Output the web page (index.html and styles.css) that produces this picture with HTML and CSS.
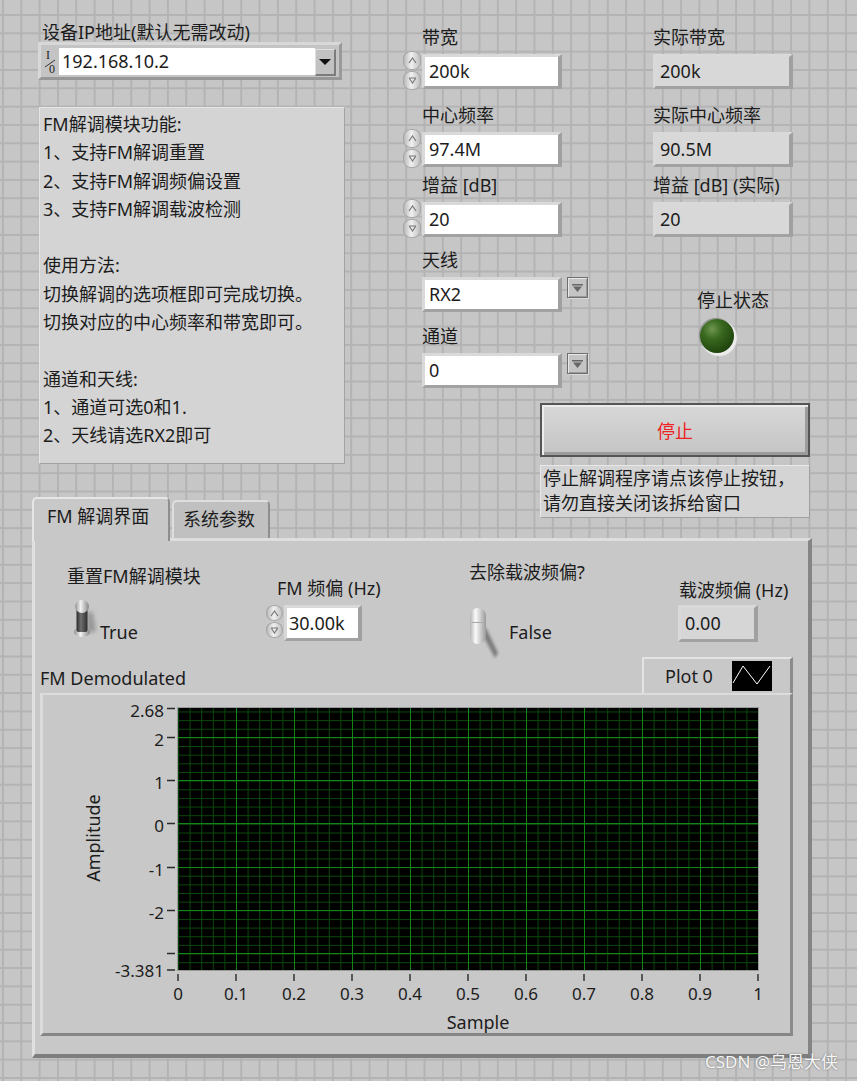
FILE: index.html
```html
<!DOCTYPE html>
<html lang="zh">
<head>
<meta charset="utf-8">
<title>FM 解调</title>
<link rel="stylesheet" href="styles.css">
</head>
<body>
<div class="top">
  <div class="col-a">
    <div class="lbl lbl-ip">设备IP地址(默认无需改动)</div>
    <div class="combo">
      <svg class="io" width="16" height="27" viewBox="0 0 16 27">
        <text x="3" y="11" class="io-t">I</text>
        <line x1="2" y1="19" x2="12" y2="12" stroke="#333" stroke-width="1"/>
        <text x="6" y="25" class="io-t">0</text>
      </svg>
      <div class="combo-val">192.168.10.2</div>
      <div class="combo-btn"><svg width="12" height="6" viewBox="0 0 12 6"><path d="M0 0H12L6 6Z" fill="#111"/></svg></div>
    </div>
    <div class="desc">
      <div>FM解调模块功能:</div>
      <div>1、支持FM解调重置</div>
      <div>2、支持FM解调频偏设置</div>
      <div>3、支持FM解调载波检测</div>
      <div class="blank"></div>
      <div>使用方法:</div>
      <div>切换解调的选项框即可完成切换。</div>
      <div>切换对应的中心频率和带宽即可。</div>
      <div class="blank"></div>
      <div>通道和天线:</div>
      <div>1、通道可选0和1.</div>
      <div>2、天线请选RX2即可</div>
    </div>
  </div>

  <div class="col-right">
    <div class="row1">
      <div class="col-b">
        <div class="ctl g1">
          <div class="lbl">带宽</div>
          <div class="num">
            <div class="inc">
              <div class="inc-b"><svg width="9" height="7" viewBox="0 0 9 7"><path d="M1 6L4.5 1L8 6" fill="none" stroke="#777" stroke-width="1.2"/></svg></div>
              <div class="inc-b"><svg width="9" height="7" viewBox="0 0 9 7"><path d="M1 1H8M1.5 1.5L4.5 6L7.5 1.5" fill="none" stroke="#777" stroke-width="1.2"/></svg></div>
            </div>
            <div class="field wbox">200k</div>
          </div>
        </div>
        <div class="ctl g2">
          <div class="lbl">中心频率</div>
          <div class="num">
            <div class="inc">
              <div class="inc-b"><svg width="9" height="7" viewBox="0 0 9 7"><path d="M1 6L4.5 1L8 6" fill="none" stroke="#777" stroke-width="1.2"/></svg></div>
              <div class="inc-b"><svg width="9" height="7" viewBox="0 0 9 7"><path d="M1 1H8M1.5 1.5L4.5 6L7.5 1.5" fill="none" stroke="#777" stroke-width="1.2"/></svg></div>
            </div>
            <div class="field wbox">97.4M</div>
          </div>
        </div>
        <div class="ctl g3">
          <div class="lbl">增益 [dB]</div>
          <div class="num">
            <div class="inc">
              <div class="inc-b"><svg width="9" height="7" viewBox="0 0 9 7"><path d="M1 6L4.5 1L8 6" fill="none" stroke="#777" stroke-width="1.2"/></svg></div>
              <div class="inc-b"><svg width="9" height="7" viewBox="0 0 9 7"><path d="M1 1H8M1.5 1.5L4.5 6L7.5 1.5" fill="none" stroke="#777" stroke-width="1.2"/></svg></div>
            </div>
            <div class="field wbox">20</div>
          </div>
        </div>
        <div class="ctl g4">
          <div class="lbl">天线</div>
          <div class="ring">
            <div class="field wbox">RX2</div>
            <div class="ring-btn"><svg width="11" height="8" viewBox="0 0 11 8"><path d="M0 0H11V1.4H0Z M1 2.6H10L5.5 8Z" fill="#666"/></svg></div>
          </div>
        </div>
        <div class="ctl g5">
          <div class="lbl">通道</div>
          <div class="ring">
            <div class="field wbox">0</div>
            <div class="ring-btn"><svg width="11" height="8" viewBox="0 0 11 8"><path d="M0 0H11V1.4H0Z M1 2.6H10L5.5 8Z" fill="#666"/></svg></div>
          </div>
        </div>
      </div>

      <div class="col-c">
        <div class="ctl g1">
          <div class="lbl">实际带宽</div>
          <div class="field ibox">200k</div>
        </div>
        <div class="ctl g2">
          <div class="lbl">实际中心频率</div>
          <div class="field ibox">90.5M</div>
        </div>
        <div class="ctl g3">
          <div class="lbl">增益 [dB] (实际)</div>
          <div class="field ibox">20</div>
        </div>
        <div class="led-grp">
          <div class="lbl led-lbl">停止状态</div>
          <div class="led"></div>
        </div>
      </div>
    </div>

    <div class="stop-btn">停止</div>
    <div class="note">停止解调程序请点该停止按钮，<br>请勿直接关闭该拆给窗口</div>
  </div>
</div>

<div class="tabctl">
  <div class="tabs">
    <div class="tab active">FM 解调界面</div>
    <div class="tab">系统参数</div>
  </div>
  <div class="panel">
    <div class="ctl-row">
      <div class="pg pg1">
        <div class="lbl">重置FM解调模块</div>
        <div class="sw-row">
          <svg class="sw-t" width="26" height="40" viewBox="0 0 26 40">
            <defs>
              <linearGradient id="tgH" x1="0" y1="0" x2="1" y2="0">
                <stop offset="0" stop-color="#8e8e8e"/><stop offset=".4" stop-color="#f2f2f2"/><stop offset="1" stop-color="#868686"/>
              </linearGradient>
              <linearGradient id="tgS" x1="0" y1="0" x2="1" y2="0">
                <stop offset="0" stop-color="#2a2a2a"/><stop offset=".4" stop-color="#707070"/><stop offset="1" stop-color="#2e2e2e"/>
              </linearGradient>
              <filter id="bl1" x="-50%" y="-50%" width="200%" height="200%"><feGaussianBlur stdDeviation="2"/></filter>
            </defs>
            <path d="M15 13 L21 15 L24 33 L15 35Z" fill="#6e6e6e" opacity=".55" filter="url(#bl1)"/>
            <ellipse cx="10" cy="34" rx="8" ry="5" fill="url(#tgH)"/>
            <rect x="4.5" y="8" width="11" height="26" rx="2" fill="url(#tgS)"/>
            <rect x="3" y="2" width="14" height="13" rx="7" fill="url(#tgH)"/>
          </svg>
          <span class="sw-txt">True</span>
        </div>
      </div>
      <div class="pg pg2">
        <div class="lbl">FM 频偏 (Hz)</div>
        <div class="num">
          <div class="inc sm">
            <div class="inc-b"><svg width="9" height="7" viewBox="0 0 9 7"><path d="M1 6L4.5 1L8 6" fill="none" stroke="#777" stroke-width="1.2"/></svg></div>
            <div class="inc-b"><svg width="9" height="7" viewBox="0 0 9 7"><path d="M1 1H8M1.5 1.5L4.5 6L7.5 1.5" fill="none" stroke="#777" stroke-width="1.2"/></svg></div>
          </div>
          <div class="field wbox fsm">30.00k</div>
        </div>
      </div>
      <div class="pg pg3">
        <div class="lbl">去除载波频偏?</div>
        <div class="sw-row">
          <svg class="sw-f" width="32" height="54" viewBox="0 0 32 54">
            <defs>
              <linearGradient id="tgF" x1="0" y1="0" x2="1" y2="0">
                <stop offset="0" stop-color="#b4b4b4"/><stop offset=".35" stop-color="#fafafa"/><stop offset="1" stop-color="#9a9a9a"/>
              </linearGradient>
              <filter id="bl2" x="-50%" y="-50%" width="200%" height="200%"><feGaussianBlur stdDeviation="1.6"/></filter>
            </defs>
            <path d="M12 24 L18 22 L30 47 L27 52 Z" fill="#4a4a4a" opacity=".6" filter="url(#bl2)"/>
            <rect x="2" y="2" width="16" height="36" rx="8" fill="url(#tgF)"/>
            <path d="M3.5 16.5 H16.5" stroke="#a8a8a8" stroke-width="1"/>
          </svg>
          <span class="sw-txt sw-false">False</span>
        </div>
      </div>
      <div class="pg pg4">
        <div class="lbl">载波频偏 (Hz)</div>
        <div class="field ibox fsm2">0.00</div>
      </div>
    </div>

    <div class="graph-head">
      <div class="graph-title">FM Demodulated</div>
      <div class="legend">
        <span class="plot-name">Plot 0</span>
        <span class="plot-icon"><svg width="40" height="30" viewBox="0 0 40 30"><path d="M1 22 L11 5 L25 23 L38 5" fill="none" stroke="#fff" stroke-width="1"/></svg></span>
      </div>
    </div>

    <div class="graph">
      <svg class="chart" width="747" height="338" viewBox="0 0 747 338">
        <defs>
          <pattern id="mv" x="135" y="0" width="11.6" height="20" patternUnits="userSpaceOnUse">
            <rect x="0" y="0" width="1" height="20" fill="#0a480a"/>
          </pattern>
          <pattern id="mh" x="0" y="7.81" width="20" height="8.6454" patternUnits="userSpaceOnUse">
            <rect x="0" y="0" width="20" height="1" fill="#0a480a"/>
          </pattern>
        </defs>
        <rect x="135" y="13" width="580" height="262" fill="#000"/>
        <rect x="135" y="13" width="580" height="262" fill="url(#mv)"/>
        <rect x="135" y="13" width="580" height="262" fill="url(#mh)"/>
        <g fill="#13861a">
          <rect x="193" y="13" width="1" height="262"/>
          <rect x="251" y="13" width="1" height="262"/>
          <rect x="309" y="13" width="1" height="262"/>
          <rect x="367" y="13" width="1" height="262"/>
          <rect x="425" y="13" width="1" height="262"/>
          <rect x="483" y="13" width="1" height="262"/>
          <rect x="541" y="13" width="1" height="262"/>
          <rect x="599" y="13" width="1" height="262"/>
          <rect x="657" y="13" width="1" height="262"/>
          <rect x="135" y="42" width="580" height="1"/>
          <rect x="135" y="85" width="580" height="1"/>
          <rect x="135" y="128" width="580" height="1"/>
          <rect x="135" y="172" width="580" height="1"/>
          <rect x="135" y="215" width="580" height="1"/>
          <rect x="135" y="258" width="580" height="1"/>
        </g>
        <rect x="134.5" y="12.5" width="581" height="263" fill="none" stroke="#9a9a9a" stroke-width="1"/>
        <g stroke="#2a2a2a" stroke-width="1.4">
          <path d="M124 13.5H132M124 42.5H132M124 85.5H132M124 128.5H132M124 172.5H132M124 215.5H132M124 258.5H132M124 275H132"/>
          <path d="M135 279V286M193 279V286M251 279V286M309 279V286M367 279V286M425 279V286M483 279V286M541 279V286M599 279V286M657 279V286M715 279V286"/>
        </g>
        <g class="ylab" text-anchor="end">
          <text x="121" y="15">2.68</text>
          <text x="121" y="44">2</text>
          <text x="121" y="87">1</text>
          <text x="121" y="130">0</text>
          <text x="121" y="174">-1</text>
          <text x="121" y="217">-2</text>
          <text x="121" y="275">-3.381</text>
        </g>
        <g class="xlab" text-anchor="middle">
          <text x="135" y="298">0</text>
          <text x="193" y="298">0.1</text>
          <text x="251" y="298">0.2</text>
          <text x="309" y="298">0.3</text>
          <text x="367" y="298">0.4</text>
          <text x="425" y="298">0.5</text>
          <text x="483" y="298">0.6</text>
          <text x="541" y="298">0.7</text>
          <text x="599" y="298">0.8</text>
          <text x="657" y="298">0.9</text>
          <text x="715" y="298">1</text>
        </g>
        <text class="axname" x="435" y="327" text-anchor="middle">Sample</text>
        <text class="axname" x="50" y="143" text-anchor="middle" transform="rotate(-90 50 143)">Amplitude</text>
      </svg>
    </div>
  </div>
</div>

<div class="wm">CSDN @乌恩大侠</div>
</body>
</html>
```

FILE: styles.css
```css
* { box-sizing: border-box; }
html, body { margin: 0; padding: 0; }
body {
  width: 857px;
  height: 1081px;
  overflow: hidden;
  position: relative;
  font-family: "Noto Sans", "Noto Sans CJK SC", sans-serif;
  font-size: 18px;
  color: #1c1c1c;
  background-color: #c6c6c6;
  background-image:
    linear-gradient(to right, #b3b3b3 0, #b3b3b3 2px, transparent 2px),
    linear-gradient(to bottom, #b3b3b3 0, #b3b3b3 2px, transparent 2px);
  background-size: 18.33px 18.33px;
  background-position: 2px 14px;
}

.lbl { line-height: 22px; height: 22px; white-space: nowrap; }

/* ---------- top area ---------- */
.top {
  display: flex;
  align-items: flex-start;
  height: 497px;
}
.col-a { margin-left: 38px; width: 307px; }
.lbl-ip { margin-top: 22px; line-height: 20px; height: 20px; padding-left: 4px; }

.combo {
  width: 304px;
  height: 38px;
  display: flex;
  align-items: flex-start;
  padding: 3px 2px 2px 2px;
  background: #c4c4c4;
  border-style: solid;
  border-width: 3px;
  border-color: #d8d8d8 #9a9a9a #979797 #d8d8d8;
}
.io { display: block; flex: none; }
.io-t { font-family: "Liberation Serif", serif; font-size: 12px; fill: #222; }
.combo-val {
  width: 256px;
  height: 27px;
  background: #fff;
  line-height: 27px;
  padding-left: 3px;
}
.combo-btn {
  width: 21px;
  height: 27px;
  margin-top: 1px;
  background: #c2c2c2;
  border-style: solid;
  border-width: 1px 2px 2px 1px;
  border-color: #e0e0e0 #7c7c7c #7c7c7c #e0e0e0;
  display: flex;
  align-items: center;
  justify-content: center;
}
.combo-btn svg { display: block; }

.desc {
  margin-top: 27px;
  margin-left: 1px;
  width: 306px;
  height: 357px;
  background: #d4d4d4;
  border-style: solid;
  border-width: 1px;
  border-color: #e6e6e6 #a2a2a2 #a2a2a2 #e6e6e6;
  padding: 2px 0 0 3px;
  line-height: 28.3px;
  white-space: nowrap;
}
.desc .blank { height: 28.3px; }

.col-right { margin-left: 58px; width: 407px; }
.row1 { display: flex; align-items: flex-start; }
.col-b { width: 187px; }
.col-c { margin-left: 63px; width: 144px; }

.g1 { margin-top: 26px; }
.g2 { margin-top: 15px; }
.g3 { margin-top: 7px; }
.g4 { margin-top: 12px; }
.g5 { margin-top: 13px; }

.col-b .lbl { padding-left: 19px; }

.num { display: flex; align-items: flex-start; margin-top: 6px; height: 35px; }
.inc {
  width: 18px;
  display: flex;
  flex-direction: column;
  gap: 1px;
  margin-top: -3px;
}
.inc-b {
  height: 19px;
  border-radius: 8px;
  background: linear-gradient(to right, #b2b2b2, #f0f0f0 45%, #bababa);
  box-shadow: inset 0 0 0 1px #a6a6a6;
  display: flex;
  align-items: center;
  justify-content: center;
}
.inc-b svg { display: block; }
.inc.sm { width: 17px; margin-top: 0; margin-left: 1px; }
.inc.sm .inc-b { height: 16px; }

.field {
  height: 35px;
  width: 140px;
  border-style: solid;
  border-width: 3px 4px 3px 3px;
  border-color: #d9d9d9 #a0a0a0 #a2a2a2 #d9d9d9;
  line-height: 29px;
  padding-left: 4px;
  white-space: nowrap;
}
.wbox { background: #fff; }
.ibox { background: #d8d8d8; margin-top: 6px; }
.num .field { margin-left: 1px; }

.ring { display: flex; align-items: flex-start; padding-left: 19px; margin-top: 6px; height: 35px; }
.ring-btn {
  margin-left: 5px;
  width: 21px;
  height: 21px;
  background: #c4c4c4;
  border: 1px solid #6e6e6e;
  box-shadow: inset 1px 1px 0 #e8e8e8, inset -1px -1px 0 #9a9a9a, 1px 1px 0 #dadada;
  display: flex;
  align-items: center;
  justify-content: center;
}
.ring-btn svg { display: block; }

.led-grp { margin-top: 52px; }
.led-lbl { margin-left: 44px; }
.led {
  margin-top: 8px;
  margin-left: 47px;
  width: 34px;
  height: 34px;
  border-radius: 50%;
  background: radial-gradient(circle at 36% 30%, #6f9650 0%, #3a6a20 30%, #22480f 70%, #17330a 100%);
  box-shadow: 2px 2px 1px 1px #ececec, -1px -1px 1px #8a8a8a;
}

.stop-btn {
  margin-top: 15px;
  margin-left: 137px;
  width: 270px;
  height: 54px;
  border: 2px solid #555;
  background: linear-gradient(#d8d8d8, #c4c4c4);
  box-shadow: inset 2px 2px 0 #ececec, inset -3px -3px 0 #9c9c9c;
  display: flex;
  align-items: center;
  justify-content: center;
  color: #ee2222;
  font-size: 18px;
}
.note {
  margin-top: 8px;
  margin-left: 137px;
  width: 270px;
  height: 53px;
  background: #d4d4d4;
  border-style: solid;
  border-width: 1px;
  border-color: #e8e8e8 #a0a0a0 #a0a0a0 #e8e8e8;
  padding: 0 0 0 2px;
  line-height: 25px;
  white-space: nowrap;
}

/* ---------- tab control ---------- */
.tabctl { margin-left: 32px; width: 780px; }
.tabs { display: flex; align-items: flex-end; height: 41px; }
.tab {
  height: 38px;
  width: 98px;
  margin-left: 2px;
  background: #c0c0c0;
  border-style: solid;
  border-width: 2px 2px 0 2px;
  border-color: #dedede #8e8e8e #dedede #dedede;
  border-radius: 5px 5px 0 0;
  padding: 6px 0 0 9px;
  line-height: 22px;
  white-space: nowrap;
}
.tab.active {
  position: relative;
  z-index: 1;
  margin-left: 0;
  width: 138px;
  height: 44px;
  margin-bottom: -3px;
  background: #c8c8c8;
  border-color: #e6e6e6 #8e8e8e #e6e6e6 #e6e6e6;
  padding: 6px 0 0 13px;
}

.panel {
  height: 520px;
  background: #c8c8c8;
  border-style: solid;
  border-width: 3px 4px 4px 3px;
  border-color: #dedede #858585 #7e7e7e #e0e0e0;
}
.ctl-row { display: flex; align-items: flex-start; height: 116px; }
.pg1 { margin-left: 32px; width: 198px; }
.pg2 { width: 204px; }
.pg3 { width: 209px; }
.pg4 { width: 100px; }

.pg1 .lbl { margin-top: 24px; }
.pg1 .sw-row { margin-top: 11px; margin-left: 5px; }
.sw-row { display: flex; align-items: flex-start; }
.sw-row svg { display: block; flex: none; }
.sw-txt { line-height: 22px; margin-top: 23px; margin-left: 2px; }

.pg2 .lbl { margin-top: 36px; padding-left: 12px; }
.pg2 .num { height: 36px; }
.fsm { width: 78px; height: 36px; line-height: 30px; padding-left: 2px; }

.pg3 .lbl { margin-top: 20px; }
.pg3 .sw-row { margin-top: 23px; margin-left: -1px; }
.sw-txt.sw-false { margin-top: 15px; margin-left: 9px; }

.pg4 .lbl { margin-top: 38px; padding-left: 1px; }
.fsm2 { width: 80px; height: 37px; margin-top: 4px; line-height: 31px; background: #d6d6d6; }

.graph-head { display: flex; align-items: flex-start; height: 36px; }
.graph-title { margin-left: 5px; margin-top: 10px; line-height: 22px; white-space: nowrap; }
.legend {
  margin-left: auto;
  margin-right: 15px;
  width: 151px;
  height: 36px;
  background: #c8c8c8;
  border-style: solid;
  border-width: 2px 3px 0 2px;
  border-color: #e4e4e4 #8c8c8c #e4e4e4 #e4e4e4;
  display: flex;
  align-items: center;
  padding-left: 21px;
}
.plot-name { width: 67px; line-height: 22px; }
.plot-icon { width: 40px; height: 30px; background: #000; }
.plot-icon svg { display: block; }

.graph {
  margin-left: 5px;
  width: 753px;
  height: 343px;
  background: #c8c8c8;
  border-style: solid;
  border-width: 2px 3px 3px 3px;
  border-color: #dcdcdc #8a8a8a #868686 #dcdcdc;
}
.chart { display: block; }
.ylab text, .xlab text {
  font-family: "Noto Sans", sans-serif;
  font-size: 17px;
  fill: #1c1c1c;
  dominant-baseline: central;
}
.axname {
  font-family: "Noto Sans", sans-serif;
  font-size: 18px;
  fill: #1c1c1c;
  dominant-baseline: central;
}

.wm {
  position: absolute;
  left: 705px;
  top: 1051px;
  font-size: 17px;
  line-height: 22px;
  color: #f6f6f6;
  text-shadow: 0 0 2px #6a6a6a;
  white-space: nowrap;
}
```
